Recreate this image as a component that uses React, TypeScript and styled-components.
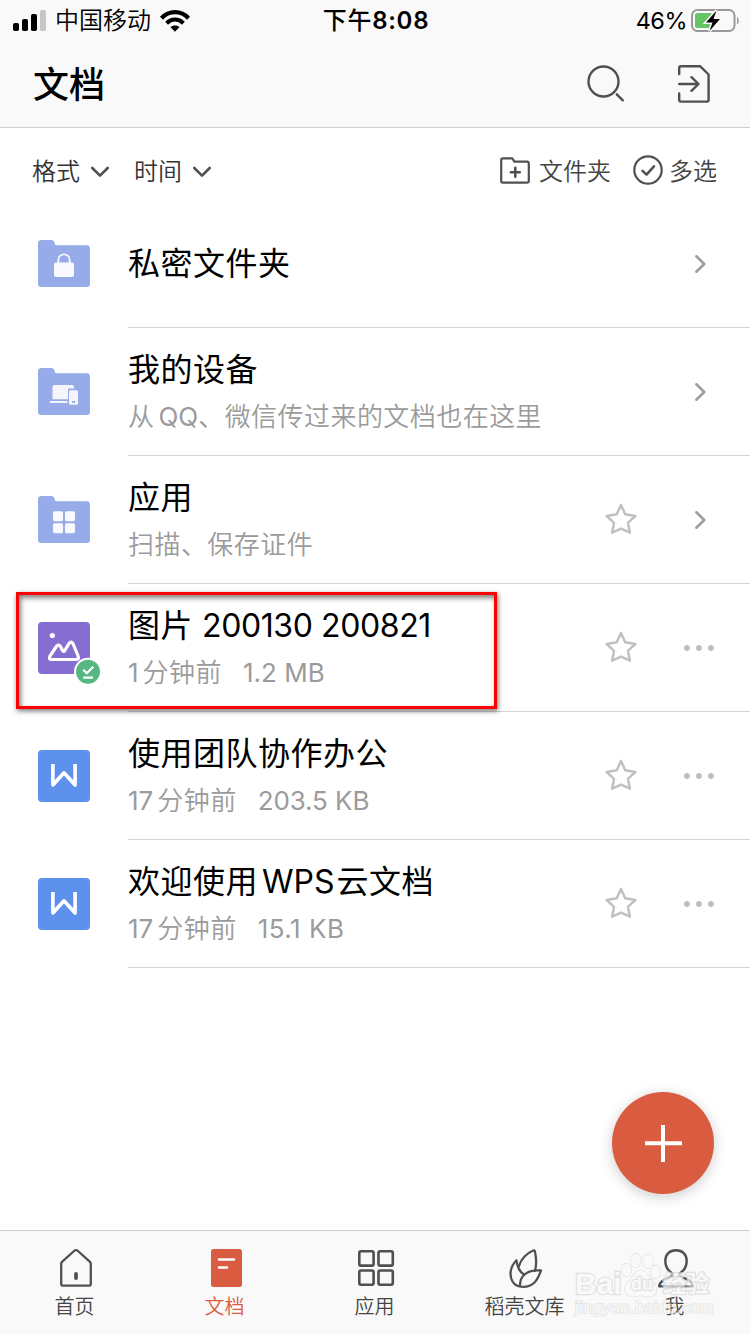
import React from "react";
import styled, { createGlobalStyle } from "styled-components";

const GlobalStyle = createGlobalStyle`
  * { box-sizing: border-box; }
  body {
    margin: 0;
    background: #fff;
    font-family: Inter, "Noto Sans CJK SC", sans-serif;
    color: #000;
  }
  svg { display: block; flex: none; overflow: visible; }
`;

const Screen = styled.div`
  position: relative;
  width: 750px;
  height: 1334px;
  overflow: hidden;
  display: flex;
  flex-direction: column;
  background: #fff;
`;

const Header = styled.header`
  height: 128px;
  flex: none;
  background: #f9f9f9;
  border-bottom: 1px solid #cfcfcf;
`;

const StatusBar = styled.div`
  height: 40px;
  padding: 0 11px 0 13px;
  display: grid;
  grid-template-columns: 1fr auto 1fr;
  align-items: center;
  font-size: 24px;
  line-height: 40px;
`;

const Carrier = styled.div`
  display: flex;
  align-items: center;
  gap: 9px;
  font-weight: 350;
`;

const CarrierName = styled.span`
  padding-top: 1px;
`;

const Clock = styled.div`
  font-weight: 600;
  letter-spacing: 0.7px;
  padding-top: 1px;
`;

const CjkMedium = styled.span`
  font-weight: 500;
`;

const Power = styled.div`
  display: flex;
  justify-content: flex-end;
  align-items: center;
  gap: 4px;
  font-size: 23.5px;
  letter-spacing: -0.5px;
`;

const NavBar = styled.div`
  height: 87px;
  padding: 0 40px 0 33px;
  display: flex;
  align-items: center;
  justify-content: space-between;
`;

const PageTitle = styled.h1`
  margin: 0;
  font-size: 36px;
  line-height: 50px;
  font-weight: 500;
  padding-top: 3px;
`;

const NavActions = styled.div`
  display: flex;
  align-items: center;
  gap: 53px;
`;

const FilterBar = styled.div`
  height: 72px;
  flex: none;
  padding: 12px 33px 0 32px;
  display: flex;
  align-items: center;
  justify-content: space-between;
  font-size: 24px;
  line-height: 36px;
  font-weight: 350;
`;

const FilterGroup = styled.div<{ $gap: number; $color: string }>`
  display: flex;
  align-items: center;
  gap: ${(p) => p.$gap}px;
  color: ${(p) => p.$color};
`;

const FilterItem = styled.div<{ $gap: number }>`
  display: flex;
  align-items: center;
  gap: ${(p) => p.$gap}px;
`;

const FilterLabel = styled.span`
  padding-top: 3px;
`;

const List = styled.main`
  flex: 1;
`;

const Row = styled.div`
  height: 128px;
  display: flex;
`;

const RowIcon = styled.div`
  position: relative;
  width: 128px;
  padding-left: 38px;
  display: flex;
  align-items: center;
`;

const SyncedBadge = styled.div`
  position: absolute;
  left: 74px;
  top: 74px;
`;

const RowBody = styled.div`
  flex: 1;
  display: flex;
  align-items: center;
  justify-content: space-between;
  padding-right: 34px;
  border-bottom: 1px solid #d4d4d4;
`;

const RowText = styled.div`
  display: flex;
  flex-direction: column;
  gap: 3px;
  padding-top: 1px;
  white-space: nowrap;
`;

const RowTitle = styled.div`
  font-size: 32px;
  line-height: 46px;
  letter-spacing: 0.5px;
  font-weight: 380;
`;

const RowMeta = styled.div`
  font-size: 26px;
  line-height: 42px;
  letter-spacing: 0.45px;
  font-weight: 350;
  color: #9b9b9b;
`;

const Latin = styled.span<{ $track?: number; $before?: number; $after?: number }>`
  font-weight: 390;
  letter-spacing: ${(p) => p.$track ?? 0}px;
  margin-left: ${(p) => p.$before ?? 0}px;
  margin-right: ${(p) => p.$after ?? 0}px;
`;

const RowActions = styled.div`
  display: flex;
  align-items: center;
  gap: 47px;
`;

const ActionSlot = styled.div`
  width: 32px;
  display: flex;
  justify-content: center;
`;

const Highlight = styled.div`
  position: absolute;
  left: 16px;
  top: 592px;
  width: 481px;
  height: 117px;
  border: 3px solid #fe0000;
  box-shadow: 1px 2px 5px rgba(0, 0, 0, 0.55), inset 2px 3px 5px rgba(0, 0, 0, 0.5);
`;

const AddButton = styled.button`
  position: absolute;
  left: 612px;
  top: 1092px;
  width: 102px;
  height: 102px;
  padding: 0;
  border: 0;
  border-radius: 50%;
  background: #d95c40;
  box-shadow: 0 3px 14px rgba(0, 0, 0, 0.2);
  display: flex;
  align-items: center;
  justify-content: center;
`;

const TabBar = styled.nav`
  height: 104px;
  flex: none;
  display: grid;
  grid-template-columns: repeat(5, 150px);
  background: #f9f9f9;
  border-top: 1px solid #cfcfcf;
`;

const Tab = styled.div<{ $active?: boolean }>`
  display: flex;
  flex-direction: column;
  align-items: center;
  gap: 4px;
  padding: 17px 1px 0 0;
  font-size: 20px;
  line-height: 30px;
  font-weight: 350;
  color: ${(p) => (p.$active ? "#d95c40" : "#444")};
`;

const TabIcon = styled.div`
  height: 40px;
  display: flex;
  align-items: center;
  padding-left: 3px;
`;

const Watermark = styled.div`
  position: absolute;
  left: 575px;
  top: 1250px;
  width: 140px;
  height: 70px;
  font-family: "Liberation Sans", "Noto Sans CJK SC", sans-serif;
  color: #fafafa;
  -webkit-text-stroke: 2.4px #d9d9d9;
  paint-order: stroke fill;
  opacity: 0.72;
`;

const WatermarkLogo = styled.div`
  display: flex;
  align-items: flex-end;
  height: 50px;
  font-weight: 700;
  line-height: 32px;
`;

const WatermarkWord = styled.span<{ $size: number; $width: number }>`
  width: ${(p) => p.$width}px;
  font-size: ${(p) => p.$size}px;
  white-space: nowrap;
`;

const WatermarkPaw = styled.div`
  position: relative;
  width: 41px;
  height: 50px;
`;

const PawLabel = styled.span`
  position: absolute;
  left: 9px;
  top: 20px;
  font-size: 18px;
  line-height: 28px;
`;

const WatermarkUrl = styled.div`
  font-size: 16px;
  line-height: 20px;
  letter-spacing: 0.6px;
  margin-top: -2px;
  -webkit-text-stroke: 1.6px #dcdcdc;
`;

const GREY = "#505050";

const SignalIcon = () => (
  <svg width="33" height="22" viewBox="0 0 33 22">
    <rect x="0" y="13" width="6" height="8" rx="1.8" />
    <rect x="9" y="9" width="6" height="12" rx="1.8" />
    <rect x="18" y="4" width="6" height="17" rx="1.8" />
    <rect x="27" y="0" width="6" height="21" rx="1.8" fill="#c6c6c6" />
  </svg>
);

const WifiIcon = () => (
  <svg width="30" height="22" viewBox="0 0 30 22" fill="none" stroke="#000">
    <path d="M1.500 8.200C9 .2 21 .2 28.500 8.200" strokeWidth="4.200" />
    <path d="M6.600 13.200C11.500 8.400 18.500 8.400 23.400 13.200" strokeWidth="4" />
    <path d="M15 21.800l-4.600-4.700c2.700-2.300 6.500-2.300 9.200 0z" fill="#000" stroke="none" />
  </svg>
);

const BatteryIcon = () => (
  <svg width="48" height="24" viewBox="0 0 48 24">
    <rect x="1" y="1" width="42.500" height="21" rx="5.500" fill="none" stroke="#999" strokeWidth="2" />
    <rect x="4" y="4" width="18" height="15" rx="2.500" fill="#65c466" />
    <path d="M46 8v7.500c2.300-1 2.300-6.500 0-7.500z" fill="#999" />
    <path
      d="M25.500 1.500L15 13.500h6.500L18.500 22 29 10h-6.500z"
      fill="#000"
      stroke="#f9f9f9"
      strokeWidth="3"
      paintOrder="stroke"
    />
  </svg>
);

const SearchIcon = () => (
  <svg width="38" height="38" viewBox="0 0 38 38" fill="none" stroke={GREY} strokeWidth="2.400" strokeLinecap="round">
    <circle cx="16.500" cy="16.500" r="15" />
    <path d="M29.800 29.300l6 6" />
  </svg>
);

const ImportIcon = () => (
  <svg width="32" height="38" viewBox="0 0 32 38" fill="none" stroke={GREY} strokeWidth="2.400" strokeLinecap="round" strokeLinejoin="round">
    <path d="M1.200 9V3Q1.200 1.200 3 1.200H22L30.600 9.500V35Q30.600 36.600 29 36.600H3Q1.200 36.600 1.200 35V28.500" />
    <path d="M1.200 19H20.500M13.500 12.200L20.500 19l-7 6.800" />
  </svg>
);

const DownIcon = () => (
  <svg width="18" height="11" viewBox="0 0 18 11" fill="none" stroke={GREY} strokeWidth="2.600" strokeLinecap="round" strokeLinejoin="round">
    <path d="M1.300 3L9 10.700l7.700-7.700" />
  </svg>
);

const NewFolderIcon = () => (
  <svg width="30" height="27" viewBox="0 0 30 27" fill="none" stroke={GREY} strokeWidth="2.200" strokeLinecap="round" strokeLinejoin="round">
    <path d="M1.200 24V3Q1.200 1.300 3 1.300H11.500Q12.500 1.300 13 2.200L14.200 4.600H27Q28.800 4.600 28.800 6.400V24Q28.800 25.700 27 25.700H3Q1.200 25.700 1.200 24Z" />
    <path d="M10.800 15.200h9M15.300 10.700v9" strokeWidth="2.500" />
  </svg>
);

const SelectIcon = () => (
  <svg width="30" height="30" viewBox="0 0 30 30" fill="none" stroke={GREY} strokeWidth="2.200" strokeLinecap="round" strokeLinejoin="round">
    <circle cx="15" cy="15" r="13.700" />
    <path d="M9.500 15.800l4 3.800 7.500-8.300" strokeWidth="2.500" />
  </svg>
);

const Folder = ({ children }: { children: React.ReactNode }) => (
  <svg width="52" height="48" viewBox="0 0 52 48">
    <path
      d="M0 3.500Q0 0 3.500 0H13.500Q15.500 0 16.300 2L17.500 5.200H48.500Q52 5.200 52 8.700V43.500Q52 47 48.500 47H3.500Q0 47 0 43.500Z"
      fill="#97abe8"
    />
    {children}
  </svg>
);

const LockFolder = () => (
  <Folder>
    <path d="M20.300 24v-4a5.700 5.700 0 0 1 11.400 0v4" fill="none" stroke="#f8faff" strokeWidth="1.700" />
    <rect x="16" y="22.500" width="20" height="14.500" rx="2" fill="#f8faff" />
  </Folder>
);

const DeviceFolder = () => (
  <Folder>
    <path d="M12 33h17.500v2H12z" fill="#f4f6fc" />
    <path d="M14.500 19.200Q14.500 17 16.500 17H34Q36 17 36 19.200V20.500H30V31.200H14.500Z" fill="#f4f6fc" />
    <rect x="31" y="22.300" width="9" height="14.500" rx="1.500" fill="#f4f6fc" />
    <rect x="34" y="33" width="3" height="1.800" fill="#97abe8" />
  </Folder>
);

const AppFolder = () => (
  <Folder>
    {[15, 27].map((x) =>
      [15.200, 27.200].map((y) => <rect key={`${x}-${y}`} x={x} y={y} width="10" height="10" rx="1.700" fill="#f9fbff" />)
    )}
  </Folder>
);

const PictureFile = () => (
  <svg width="52" height="52" viewBox="0 0 52 52">
    <rect width="52" height="52" rx="4" fill="#866dd2" />
    <circle cx="14.300" cy="13.500" r="2.600" fill="#fff" />
    <path
      d="M13.500 37.500Q10.200 37.300 12 34L18.300 24.500Q20.500 21.800 22.500 24.600L24.500 28.500Q25.500 30.300 26.800 28.500L31 21.500Q33.200 18.500 35.200 22L40.300 34.500Q41.200 37.500 38 37.500Z"
      fill="none"
      stroke="#fff"
      strokeWidth="3.200"
      strokeLinejoin="round"
    />
  </svg>
);

const WordFile = () => (
  <svg width="52" height="52" viewBox="0 0 52 52">
    <rect width="52" height="52" rx="4" fill="#5e91ec" />
    <path d="M14.900 14V35L26 22.800 37.100 35V14" fill="none" stroke="#fff" strokeWidth="3.600" strokeLinejoin="round" />
  </svg>
);

const SyncedIcon = () => (
  <svg width="28" height="28" viewBox="0 0 28 28">
    <circle cx="14" cy="13.800" r="14" fill="#fff" />
    <circle cx="14" cy="13.800" r="12" fill="#57b782" />
    <path d="M9.300 11.700l3.500 3.500 6.500-6.500M9.200 19.700h9.800" fill="none" stroke="#fff" strokeWidth="2.300" />
  </svg>
);

const StarIcon = () => (
  <svg width="32" height="32" viewBox="0 0 32 32" fill="none" stroke="#c1c1c1" strokeWidth="2.500" strokeLinejoin="round">
    <path d="M16 .9L20.200 10.300 30.300 12 23 18.900 24.900 28.700 16 24.600 7.100 28.700 9 18.900 1.700 12 11.800 10.300Z" />
  </svg>
);

const NextIcon = () => (
  <svg width="11" height="18" viewBox="0 0 11 18" fill="none" stroke="#999ea3" strokeWidth="2.600" strokeLinecap="round" strokeLinejoin="round">
    <path d="M1.300 1.300L9.200 9l-7.900 7.700" />
  </svg>
);

const MoreIcon = () => (
  <svg width="32" height="6" viewBox="0 0 32 6" fill="#bdbdbd">
    <circle cx="3" cy="3" r="2.900" />
    <circle cx="15" cy="3" r="2.900" />
    <circle cx="27" cy="3" r="2.900" />
  </svg>
);

const PlusIcon = () => (
  <svg width="38" height="38" viewBox="0 0 38 38" stroke="#fff" strokeWidth="4">
    <path d="M19 .9v37M1 19.200h37" />
  </svg>
);

const HomeIcon = () => (
  <svg width="32" height="38" viewBox="0 0 32 38" fill="none" stroke={GREY} strokeWidth="2.300" strokeLinejoin="round" strokeLinecap="round">
    <path d="M1.200 35V14.500Q1.200 13.500 2 12.800L14.600 1.500Q16 .6 17.400 1.500L30 12.800Q30.800 13.500 30.800 14.500V35Q30.800 36.600 29.200 36.600H2.800Q1.200 36.600 1.200 35Z" />
    <path d="M16 25v4" strokeWidth="3.800" />
  </svg>
);

const DocsIcon = () => (
  <svg width="31" height="38" viewBox="0 0 31 38">
    <rect width="31" height="38" rx="2.500" fill="#d95c40" />
    <path d="M8 10.500h15M8 18.500h8" stroke="#fff" strokeWidth="2.600" strokeLinecap="round" />
  </svg>
);

const AppsIcon = () => (
  <svg width="36" height="36" viewBox="0 0 36 36" fill="none" stroke={GREY} strokeWidth="2.600">
    {[1.300, 20.500].map((x) =>
      [1.300, 20.500].map((y) => <rect key={`${x}-${y}`} x={x} y={y} width="14.300" height="14.300" rx="1.700" />)
    )}
  </svg>
);

const LeafIcon = () => (
  <svg width="34" height="39" viewBox="0 0 34 39" fill="none" stroke={GREY} strokeWidth="2.300" strokeLinejoin="round" strokeLinecap="round">
    <path d="M10 17C12 10 18 4 24.300 1.500Q26 1.200 26 3C27.300 9 27.800 16 25.800 22" />
    <path d="M7.300 11.500C.8 18 .2 27 3.500 32.500 8 40 20 39 25.500 33.500 29 30 30.500 25.500 32 21.500 25 20.800 19.500 22 15.500 25.500 12 28.500 11 32 11 36.500" />
    <path d="M7.300 11.500C8.500 16.500 9.500 23 15.300 25.600" />
  </svg>
);

const PersonIcon = () => (
  <svg width="36" height="39" viewBox="0 0 36 39" fill="none" stroke={GREY} strokeWidth="2.400" strokeLinejoin="round" strokeLinecap="round">
    <path d="M14.500 26.500V24.500C9.500 21.500 7.300 17 7.300 12 7.300 5.500 11.500 1.200 18 1.200S28.700 5.500 28.700 12C28.700 17 26.500 21.500 21.500 24.500V26.500L31 31.500Q34.500 34 34.800 37.300H1.200Q1.500 34 5 31.500Z" />
  </svg>
);

const PawShape = () => (
  <svg width="41" height="50" viewBox="0 0 41 50" fill="#fafafa" stroke="#d9d9d9" strokeWidth="1.300">
    <ellipse cx="4.500" cy="20" rx="4.800" ry="6.500" />
    <ellipse cx="13.700" cy="10.500" rx="5" ry="7" />
    <ellipse cx="26" cy="11.500" rx="5" ry="7" />
    <ellipse cx="33.500" cy="22" rx="5" ry="6.500" />
    <path d="M19 20.500C24 20.500 26 26 30 31 37 38 35 46.500 27 46.500 23 46.500 22 45.500 19 45.500S15 46.500 11 46.500C2 46.500 0 38 7 31 12 26 13 20.500 19 20.500Z" />
  </svg>
);

interface Entry {
  icon: React.ReactNode;
  title: React.ReactNode;
  meta?: React.ReactNode;
  star?: boolean;
  more?: boolean;
  synced?: boolean;
}

const entries: Entry[] = [
  { icon: <LockFolder />, title: "私密文件夹" },
  {
    icon: <DeviceFolder />,
    title: "我的设备",
    meta: (
      <>
        从<Latin $before={4}>QQ</Latin>、微信传过来的文档也在这里
      </>
    ),
  },
  { icon: <AppFolder />, title: "应用", meta: "扫描、保存证件", star: true },
  {
    icon: <PictureFile />,
    title: (
      <>
        图片<Latin $before={9} $track={-0.4}>200130 200821</Latin>
      </>
    ),
    meta: (
      <>
        <Latin $after={4}>1</Latin>分钟前<Latin $before={21}>1.2 MB</Latin>
      </>
    ),
    star: true,
    more: true,
    synced: true,
  },
  {
    icon: <WordFile />,
    title: "使用团队协作办公",
    meta: (
      <>
        <Latin $after={4}>17</Latin>分钟前<Latin $before={21} $track={-0.1}>203.5 KB</Latin>
      </>
    ),
    star: true,
    more: true,
  },
  {
    icon: <WordFile />,
    title: (
      <>
        欢迎使用<Latin $before={4} $after={2}>WPS</Latin>云文档
      </>
    ),
    meta: (
      <>
        <Latin $after={4}>17</Latin>分钟前<Latin $before={21} $track={0.5}>15.1 KB</Latin>
      </>
    ),
    star: true,
    more: true,
  },
];

const tabs = [
  { label: "首页", icon: <HomeIcon /> },
  { label: "文档", icon: <DocsIcon />, active: true },
  { label: "应用", icon: <AppsIcon /> },
  { label: "稻壳文库", icon: <LeafIcon /> },
  { label: "我", icon: <PersonIcon /> },
];

export default function App() {
  return (
    <Screen>
      <GlobalStyle />
      <Header>
        <StatusBar>
          <Carrier>
            <SignalIcon />
            <CarrierName>中国移动</CarrierName>
            <WifiIcon />
          </Carrier>
          <Clock>
            <CjkMedium>下午</CjkMedium>8:08
          </Clock>
          <Power>
            46%
            <BatteryIcon />
          </Power>
        </StatusBar>
        <NavBar>
          <PageTitle>文档</PageTitle>
          <NavActions>
            <SearchIcon />
            <ImportIcon />
          </NavActions>
        </NavBar>
      </Header>
      <FilterBar>
        <FilterGroup $gap={25} $color="#333">
          <FilterItem $gap={11}>
            <FilterLabel>格式</FilterLabel>
            <DownIcon />
          </FilterItem>
          <FilterItem $gap={11}>
            <FilterLabel>时间</FilterLabel>
            <DownIcon />
          </FilterItem>
        </FilterGroup>
        <FilterGroup $gap={22} $color="#444">
          <FilterItem $gap={9}>
            <NewFolderIcon />
            <FilterLabel>文件夹</FilterLabel>
          </FilterItem>
          <FilterItem $gap={6}>
            <SelectIcon />
            <FilterLabel>多选</FilterLabel>
          </FilterItem>
        </FilterGroup>
      </FilterBar>
      <List>
        {entries.map((entry, index) => (
          <Row key={index}>
            <RowIcon>
              {entry.icon}
              {entry.synced && (
                <SyncedBadge>
                  <SyncedIcon />
                </SyncedBadge>
              )}
            </RowIcon>
            <RowBody>
              <RowText>
                <RowTitle>{entry.title}</RowTitle>
                {entry.meta && <RowMeta>{entry.meta}</RowMeta>}
              </RowText>
              <RowActions>
                {entry.star && <StarIcon />}
                <ActionSlot>{entry.more ? <MoreIcon /> : <NextIcon />}</ActionSlot>
              </RowActions>
            </RowBody>
          </Row>
        ))}
      </List>
      <TabBar>
        {tabs.map((tab) => (
          <Tab key={tab.label} $active={tab.active}>
            <TabIcon>{tab.icon}</TabIcon>
            {tab.label}
          </Tab>
        ))}
      </TabBar>
      <Highlight />
      <AddButton aria-label="新建">
        <PlusIcon />
      </AddButton>
      <Watermark>
        <WatermarkLogo>
          <WatermarkWord $size={30} $width={47}>Bai</WatermarkWord>
          <WatermarkPaw>
            <PawShape />
            <PawLabel>du</PawLabel>
          </WatermarkPaw>
          <WatermarkWord $size={23} $width={48}>经验</WatermarkWord>
        </WatermarkLogo>
        <WatermarkUrl>jingyan.baidu.com</WatermarkUrl>
      </Watermark>
    </Screen>
  );
}
